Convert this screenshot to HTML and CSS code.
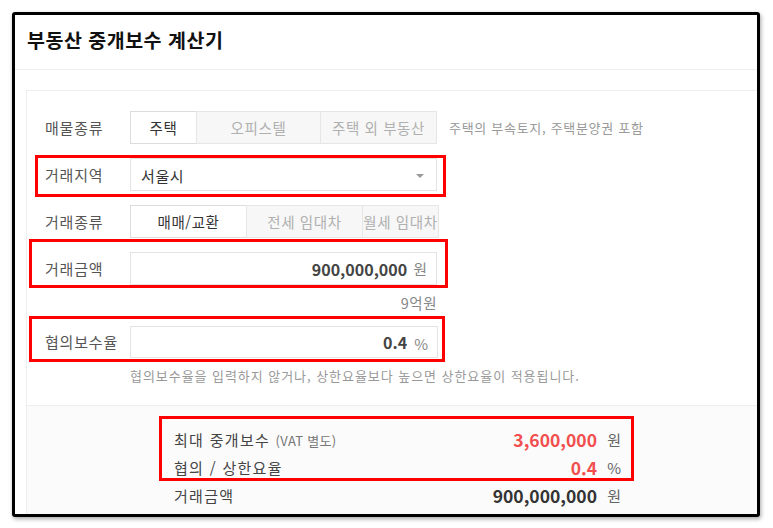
FILE: index.html
```html
<!DOCTYPE html>
<html lang="ko">
<head>
<meta charset="utf-8">
<title>부동산 중개보수 계산기</title>
<link rel="stylesheet" href="styles.css">
</head>
<body>
<div class="frame">
  <div class="header"><h1 class="title">부동산 중개보수 계산기</h1></div>
  <div class="content">
    <div class="card">
      <div class="form">
        <div class="row">
          <div class="label">매물종류</div>
          <div class="seg seg-3">
            <div class="opt active w67">주택</div>
            <div class="opt w124">오피스텔</div>
            <div class="opt w116">주택 외 부동산</div>
          </div>
          <div class="note">주택의 부속토지, 주택분양권 포함</div>
        </div>
        <div class="row">
          <div class="label">거래지역</div>
          <div class="select"><span>서울시</span><span class="caret"></span></div>
        </div>
        <div class="row">
          <div class="label">거래종류</div>
          <div class="seg">
            <div class="opt active w116">매매/교환</div>
            <div class="opt w115">전세 임대차</div>
            <div class="opt w76">월세 임대차</div>
          </div>
        </div>
        <div class="row">
          <div class="label">거래금액</div>
          <div class="input"><span class="val">900,000,000</span><span class="unit">원</span></div>
        </div>
        <div class="subrow"><span class="sub">9억원</span></div>
        <div class="row row-rate">
          <div class="label">협의보수율</div>
          <div class="input input-rate"><span class="val">0.4</span><span class="unit unit-pct">%</span></div>
        </div>
        <div class="help">협의보수율을 입력하지 않거나, 상한요율보다 높으면 상한요율이 적용됩니다.</div>
      </div>
      <div class="result">
        <div class="rrow">
          <div class="rlabel">최대 중개보수 <span class="small">(VAT 별도)</span></div>
          <div class="rval red">3,600,000</div><div class="runit">원</div>
        </div>
        <div class="rrow">
          <div class="rlabel">협의 / 상한요율</div>
          <div class="rval red">0.4</div><div class="runit">%</div>
        </div>
        <div class="rrow">
          <div class="rlabel">거래금액</div>
          <div class="rval">900,000,000</div><div class="runit">원</div>
        </div>
      </div>
    </div>
  </div>
</div>
<div class="mark mark-region"></div>
<div class="mark mark-amount"></div>
<div class="mark mark-rate"></div>
<div class="mark mark-result"></div>
</body>
</html>
```
FILE: styles.css
```css
* { box-sizing: border-box; }
html, body { margin: 0; padding: 0; background: #fff; }
body {
  font-family: "Noto Sans CJK KR", "Noto Sans", sans-serif;
  color: #333;
  width: 773px;
  height: 528px;
  overflow: hidden;
  position: relative;
}
.frame {
  margin: 12px 0 0 12px;
  width: 748px;
  height: 505px;
  border: 3px solid #000;
  border-radius: 3px;
  box-shadow: 1px 2px 4px rgba(0,0,0,0.35);
  overflow: hidden;
  background: #fff;
}
.header {
  height: 55px;
  border-bottom: 1px solid #eeeeee;
  display: flex;
  align-items: center;
  padding: 0 0 4px 12px;
}
.title {
  margin: 0;
  font-size: 19.5px;
  font-weight: 700;
  color: #111;
  line-height: 24px;
  letter-spacing: 0.5px;
}
.content { padding: 20px 0 0 11px; }
.card {
  border-top: 1px solid #eeeeee;
  border-left: 1px solid #eeeeee;
  height: 500px;
}
.form { padding: 20px 0 20px 18px; }
.row {
  display: flex;
  align-items: center;
  height: 33px;
  margin-bottom: 14px;
}
.label {
  width: 85px;
  font-size: 15px;
  color: #555;
  line-height: 20px;
  letter-spacing: 0.8px;
  white-space: nowrap;
}
.seg { display: flex; height: 33px; }
.opt {
  height: 33px;
  border: 1px solid #e6e6e6;
  margin-left: -1px;
  background: #f7f7f7;
  color: #b0b0b0;
  font-size: 14.5px;
  display: flex;
  align-items: center;
  justify-content: center;
  line-height: 20px;
  letter-spacing: 0.6px;
  white-space: nowrap;
  overflow: hidden;
}
.opt:first-child { margin-left: 0; }
.opt.active { background: #fff; color: #333; border-color: #dcdcdc; }
.w67 { width: 67px; }
.w124 { width: 125px; }
.w116 { width: 117px; }
.w115 { width: 117px; }
.w76 { width: 77px; }
.note {
  margin-left: 12px;
  font-size: 13px;
  color: #999;
  line-height: 18px;
  letter-spacing: 0.7px;
  white-space: nowrap;
}
.select {
  width: 307px;
  height: 33px;
  border: 1px solid #e3e3e3;
  display: flex;
  align-items: center;
  justify-content: space-between;
  padding: 2px 10px 0 10px;
  font-size: 15px;
  color: #333;
  letter-spacing: 0.6px;
}
.caret {
  width: 0; height: 0;
  border-left: 4px solid transparent;
  border-right: 4px solid transparent;
  border-top: 4px solid #999;
  margin-right: 2px;
}
.input {
  width: 307px;
  height: 33px;
  border: 1px solid #e3e3e3;
  display: flex;
  align-items: center;
  justify-content: flex-end;
  padding: 0 9px 0 10px;
}
.input-rate { width: 308px; height: 32px; }
.val { font-size: 16px; font-weight: 700; color: #444; line-height: 20px; }
.unit { font-size: 15px; color: #888; margin-left: 6px; line-height: 20px; }
.unit-pct { margin-top: 4px; margin-left: 7px; }
.subrow {
  width: 392px;
  text-align: right;
  margin-top: -9px;
  height: 20px;
  margin-bottom: 16px;
}
.sub { font-size: 14.5px; color: #888; line-height: 20px; letter-spacing: 0.5px; }
.row-rate { height: 32px; margin-bottom: 0; }
.help {
  margin: 9px 0 0 85px;
  font-size: 13px;
  color: #999;
  line-height: 18px;
  letter-spacing: 0.95px;
  white-space: nowrap;
}
.result {
  border-top: 1px solid #eeeeee;
  background: #fbfbfb;
  padding: 20px 0 0 147px;
  height: 200px;
}
.rrow {
  width: 447px;
  height: 28px;
  display: flex;
  align-items: center;
}
.rlabel { flex: 1; font-size: 15px; color: #444; line-height: 20px; letter-spacing: 1.3px; white-space: nowrap; }
.small { font-size: 13px; color: #777; letter-spacing: 0.3px; }
.rval { font-size: 17.5px; font-weight: 700; color: #333; line-height: 22px; }
.rval.red { color: #f24e4e; }
.runit { width: 24px; text-align: right; font-size: 15px; color: #666; line-height: 20px; }
.mark {
  position: absolute;
  border: 3px solid #ff0000;
  pointer-events: none;
}
.mark-region { left: 35px; top: 155px; width: 411px; height: 42px; }
.mark-amount { left: 29px; top: 239px; width: 419px; height: 49px; }
.mark-rate { left: 29px; top: 316px; width: 416px; height: 46px; }
.mark-result { left: 159px; top: 416px; width: 475px; height: 65px; }
```
